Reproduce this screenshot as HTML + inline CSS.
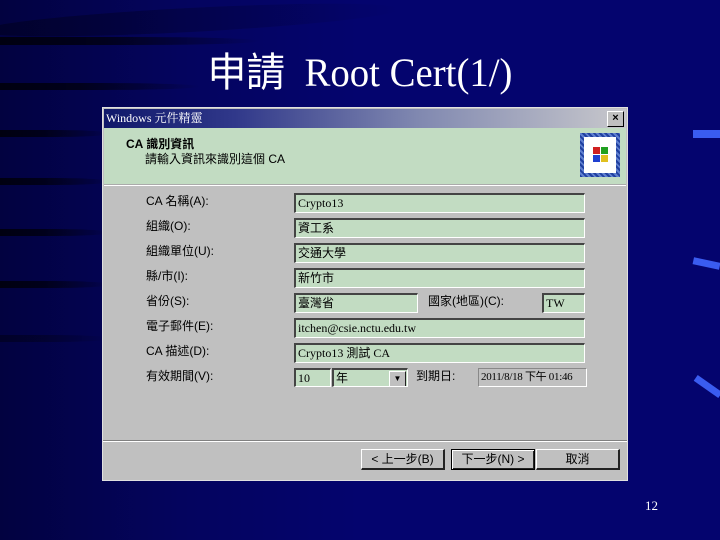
<!DOCTYPE html>
<html><head><meta charset="utf-8"><style>
body{margin:0;width:720px;height:540px;overflow:hidden;background:linear-gradient(90deg,#020240 0%,#04045e 25%,#04046e 50%,#04046e 100%);position:relative;font-family:"Liberation Serif","Noto Serif CJK SC","Noto Sans CJK TC",serif}
.a{position:absolute}
.st{position:absolute;left:0;height:7px;background:linear-gradient(90deg,#000010 0%,rgba(0,0,16,.8) 40%,rgba(0,0,16,0) 100%);border-radius:0 50% 50% 0}
.title{left:0;width:720px;top:40px;text-align:center;color:#fff;font-size:40px;font-family:"Liberation Serif","Noto Sans CJK TC",serif;transform:scaleX(.97)}
.dlg{left:102px;top:107px;width:526px;height:374px;background:#c0c0c0;border:1px solid #e0e0e0;box-sizing:border-box}
.tb{left:1px;top:1px;right:1px;height:19px;background:linear-gradient(90deg,#10186a,#30388a 25%,#8088b0 60%,#c8c8cc);color:#fff;font-size:12px;line-height:19px;padding-left:2px}
.hdr{left:1px;top:20px;right:1px;height:56px;background:#c2dcc2;border-bottom:2px groove #fff}
.lbl{font-size:12px;color:#000;font-family:"Liberation Sans","Noto Sans CJK TC",sans-serif}
.box{position:absolute;background:#c2dcc2;border-top:2px solid #444;border-left:2px solid #444;border-right:1px solid #fff;border-bottom:1px solid #fff;box-sizing:border-box;font-size:12px;line-height:16px;padding-left:2px;white-space:nowrap;overflow:hidden;font-family:"Liberation Serif","Noto Sans CJK TC",serif}
.btn{position:absolute;top:449px;height:21px;width:84px;background:#c0c0c0;border-top:1px solid #fff;border-left:1px solid #fff;border-right:2px solid #222;border-bottom:2px solid #222;box-sizing:border-box;text-align:center;font-size:12px;line-height:18px;font-family:"Liberation Sans","Noto Sans CJK TC",sans-serif}
</style></head><body>
<div class="a" style="left:-20px;top:8px;width:420px;height:24px;background:linear-gradient(90deg,rgba(0,0,30,.6),rgba(0,0,30,0));transform:rotate(-3deg);border-radius:50%"></div>
<div class="st" style="top:37px;width:260px;height:8px"></div>
<div class="st" style="top:83px;width:200px"></div>
<div class="st" style="top:130px;width:110px"></div>
<div class="st" style="top:178px;width:110px"></div>
<div class="st" style="top:229px;width:110px"></div>
<div class="st" style="top:281px;width:110px"></div>
<div class="st" style="top:335px;width:110px;opacity:.5"></div>
<div class="a" style="left:693px;top:130px;width:27px;height:8px;background:#3a5cf0"></div>
<div class="a" style="left:693px;top:260px;width:27px;height:7px;background:#3a5cf0;transform:rotate(12deg)"></div>
<div class="a" style="left:693px;top:383px;width:30px;height:7px;background:#3a5cf0;transform:rotate(35deg)"></div>
<div class="a title">申請&nbsp; Root Cert(1/)</div>
<div class="a dlg">
 <div class="a tb">Windows 元件精靈</div>
 <div class="a" style="right:3px;top:3px;width:15px;height:14px;background:#c0c0c0;border:1px solid #000;border-top-color:#fff;border-left-color:#fff;font-size:11px;line-height:13px;text-align:center;font-weight:bold;font-family:'Liberation Sans',sans-serif">×</div>
 <div class="a hdr">
  <div class="a lbl" style="left:22px;top:7px;font-weight:bold">CA 識別資訊</div>
  <div class="a lbl" style="left:41px;top:22px">請輸入資訊來識別這個 CA</div>
  <div class="a" style="left:476px;top:5px;width:40px;height:44px;background:repeating-linear-gradient(45deg,#2040a0 0 2px,#6080d0 2px 4px);padding:4px;box-sizing:border-box"><div style="width:32px;height:36px;background:#fff;position:relative">
   <div class="a" style="left:9px;top:10px;width:7px;height:7px;background:#d02020"></div><div class="a" style="left:17px;top:10px;width:7px;height:7px;background:#20a020"></div>
   <div class="a" style="left:9px;top:18px;width:7px;height:7px;background:#2040d0"></div><div class="a" style="left:17px;top:18px;width:7px;height:7px;background:#e0c020"></div></div></div>
 </div>
</div>
<div class="a lbl" style="left:146px;top:192px">CA 名稱(A):</div>
<div class="a lbl" style="left:146px;top:217px">組織(O):</div>
<div class="a lbl" style="left:146px;top:242px">組織單位(U):</div>
<div class="a lbl" style="left:146px;top:267px">縣/市(I):</div>
<div class="a lbl" style="left:146px;top:292px">省份(S):</div>
<div class="a lbl" style="left:428px;top:292px">國家(地區)(C):</div>
<div class="a lbl" style="left:146px;top:317px">電子郵件(E):</div>
<div class="a lbl" style="left:146px;top:342px">CA 描述(D):</div>
<div class="a lbl" style="left:146px;top:367px">有效期間(V):</div>
<div class="a lbl" style="left:416px;top:367px">到期日:</div>
<div class="box" style="left:294px;top:193px;width:291px;height:20px">Crypto13</div>
<div class="box" style="left:294px;top:218px;width:291px;height:20px">資工系</div>
<div class="box" style="left:294px;top:243px;width:291px;height:20px">交通大學</div>
<div class="box" style="left:294px;top:268px;width:291px;height:20px">新竹市</div>
<div class="box" style="left:294px;top:293px;width:124px;height:20px">臺灣省</div>
<div class="box" style="left:542px;top:293px;width:43px;height:20px">TW</div>
<div class="box" style="left:294px;top:318px;width:291px;height:20px">itchen@csie.nctu.edu.tw</div>
<div class="box" style="left:294px;top:343px;width:291px;height:20px">Crypto13 測試 CA</div>
<div class="box" style="left:294px;top:368px;width:37px;height:19px">10</div>
<div class="box" style="left:332px;top:368px;width:76px;height:19px">年<div class="a" style="right:1px;top:1px;width:15px;height:14px;background:#c0c0c0;border:1px solid #fff;border-right-color:#222;border-bottom-color:#222;font-size:8px;line-height:14px;text-align:center">▼</div></div>
<div class="box" style="left:478px;top:368px;width:109px;height:19px;background:#c0c0c0;border-color:#888 #fff #fff #888;border-width:1px;font-size:11px;letter-spacing:-.3px">2011/8/18 下午 01:46</div>
<div class="a" style="left:103px;top:440px;width:524px;height:0;border-top:1px solid #808080;border-bottom:1px solid #fff"></div>
<div class="btn" style="left:361px">&lt; 上一步(B)</div>
<div class="btn" style="left:451px;border:1px solid #000;box-shadow:inset 1px 1px #fff,inset -1px -1px #222">下一步(N) &gt;</div>
<div class="btn" style="left:536px">取消</div>
<div class="a" style="left:645px;top:498px;color:#fff;font-size:13px">12</div>
</body></html>
